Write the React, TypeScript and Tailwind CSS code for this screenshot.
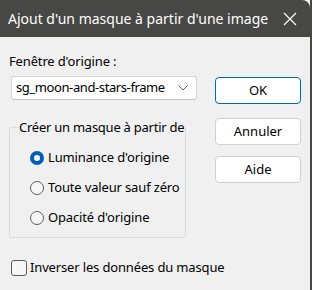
import React, { useState } from 'react';

const font = { fontFamily: '"Noto Sans", "Open Sans", sans-serif' };

function Radio({ checked, label, onClick }: { checked: boolean; label: string; onClick: () => void }) {
  return (
    <div className="flex items-center h-[30px] cursor-default whitespace-nowrap" onClick={onClick}>
      {checked ? (
        <span className="w-[14px] h-[14px] rounded-full bg-[#005fb8] flex items-center justify-center shrink-0">
          <span className="w-[6px] h-[6px] rounded-full bg-white" />
        </span>
      ) : (
        <span className="w-[14px] h-[14px] rounded-full border border-[#5b5b5b] bg-[#f7f7f7] shrink-0" />
      )}
      <span className="ml-[4px] text-[13px] tracking-[-0.15px] text-black">{label}</span>
    </div>
  );
}

export default function App() {
  const [source, setSource] = useState(0);
  const [invert, setInvert] = useState(false);

  const options = ["Luminance d'origine", 'Toute valeur sauf zéro', "Opacité d'origine"];

  return (
    <div className="w-[312px] h-[290px] bg-[#f0f0f0] flex flex-col border-r-2 border-[#474745] whitespace-nowrap" style={font}>
      {/* barre de titre */}
      <div className="h-[37px] bg-[#474745] rounded-tr-[8px] flex items-center justify-between pl-[8px] pr-[13px] shrink-0">
        <span className="text-white text-[14px]">Ajout d'un masque à partir d'une image</span>
        <svg width="14" height="14" viewBox="0 0 14 14" className="mt-[1px]">
          <path d="M1 1 L13 13 M13 1 L1 13" stroke="white" strokeWidth="1.2" />
        </svg>
      </div>

      <div className="flex flex-1">
        <div className="w-[213px] pl-[9px]">
          <div className="mt-[15px] text-[13px] leading-[19px] tracking-[-0.15px] text-black">Fenêtre d'origine :</div>
          <div className="mt-[5px] ml-[2px] w-[186px] h-[24px] bg-white border border-[#d5d5d5] border-b-[#c2c2c2] rounded-[3px] flex items-center justify-between pl-[4px] pr-[8px]">
            <span className="text-[13px] tracking-[-0.4px] text-black">sg_moon-and-stars-frame</span>
            <svg width="10" height="6" viewBox="0 0 10 6">
              <path d="M0.5 0.5 L5 5 L9.5 0.5" fill="none" stroke="#5a5a5a" strokeWidth="1" />
            </svg>
          </div>

          <fieldset className="mt-[19px] w-[177px] h-[119px] border border-[#dcdcdc] rounded-[2px] pl-[20px] pr-0 pb-0 pt-[7px]">
            <legend className="px-[1px] -ml-[12px] text-[13px] leading-[17px] tracking-[-0.25px] text-black">Créer un masque à partir de</legend>
            {options.map((o, i) => (
              <Radio key={o} checked={source === i} label={o} onClick={() => setSource(i)} />
            ))}
          </fieldset>

          <div className="mt-[21px] ml-[2px] h-[18px] flex items-center cursor-default" onClick={() => setInvert(!invert)}>
            <span className="w-[16px] h-[16px] shrink-0 rounded-[3px] border border-[#5b5b5b] bg-[#f7f7f7]" />
            <span className="ml-[3px] text-[13px] tracking-[-0.15px] text-black">Inverser les données du masque</span>
          </div>
        </div>

        <div className="flex flex-col pt-[40px] pl-[2px]">
          <button className="w-[86px] h-[27px] bg-white border border-[#0067c0] rounded-[4px] text-[13px] text-black">OK</button>
          <button className="mt-[14px] w-[86px] h-[27px] bg-white border border-[#d0d0d0] rounded-[4px] text-[13px] text-black">Annuler</button>
          <button className="mt-[11px] w-[86px] h-[27px] bg-white border border-[#d0d0d0] rounded-[4px] text-[13px] text-black">Aide</button>
        </div>
      </div>
    </div>
  );
}
